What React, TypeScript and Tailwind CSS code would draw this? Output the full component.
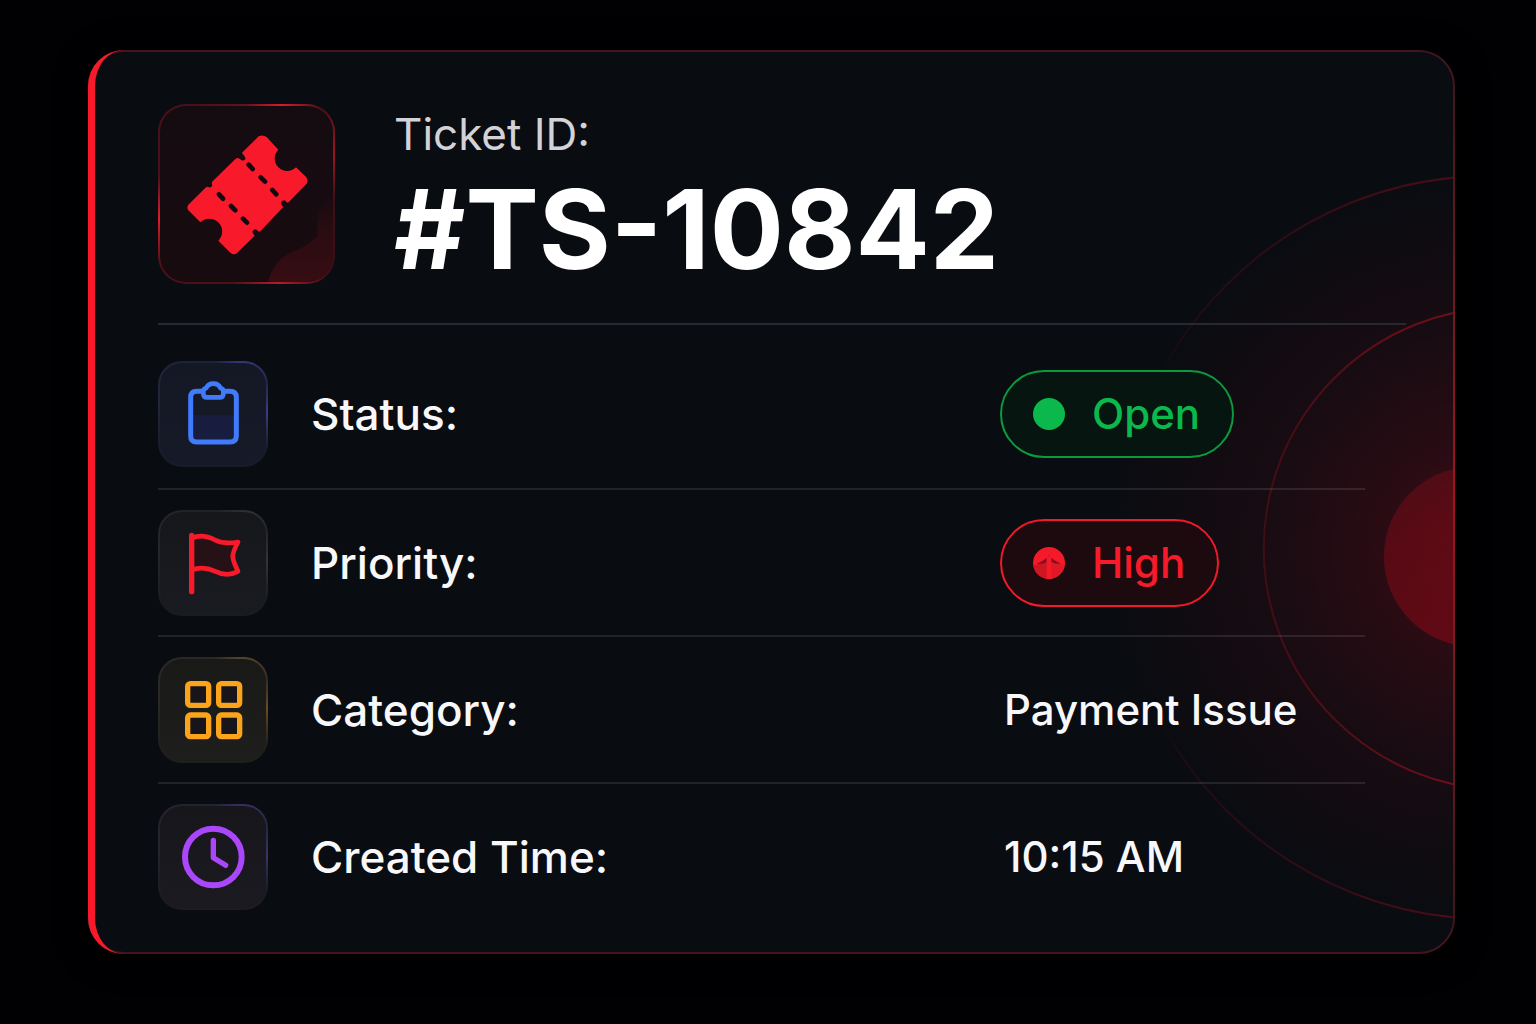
import type { ReactNode } from "react";

const TILE_BASE = "h-[106px] w-[110px] shrink-0 rounded-[24px] border-2 border-transparent";

function TicketIcon() {
  return (
    <svg viewBox="60 49 519 528" className="block h-full w-full" aria-hidden="true">
      <defs>
        <linearGradient id="waveFill" x1="0" y1="0" x2="0" y2="1">
          <stop offset="0" stopColor="#3a0d13" stopOpacity="0" />
          <stop offset="0.5" stopColor="#3a0d13" stopOpacity="0.6" />
          <stop offset="1" stopColor="#3a0d13" stopOpacity="0.9" />
        </linearGradient>
      </defs>
      <path d="M384 580C392 545 412 512 444 494C476 478 506 468 534 436C526 400 530 350 585 310V585H384Z" fill="url(#waveFill)" />
      <path
        fill="#f81a2a"
        d="M356 140Q368 134 380 142L415 180A34 34 0 1 0 468 233L499 263Q505 272 500 282L446 338Q440 341 438 335Q430 328 424 337Q422 345 430 352L364 422Q357 429 354 424Q346 414 338 424Q336 431 344 438L292 489Q282 498 271 489L235 453A34 34 0 0 0 181 398L145 362Q139 354 145 345L198 293Q204 289 207 293Q213 296 217 287Q213 279 218 275L287 207Q293 203 300 208Q308 217 316 209Q318 202 308 193Q305 189 309 186Z"
      />
      <path
        d="M326 225L338 238M362 263L375 276M397 301L409 314M237 314L249 327M273 349L286 362M309 387L321 399"
        stroke="#16090e"
        strokeWidth="14"
        strokeLinecap="round"
      />
    </svg>
  );
}

function ClipboardIcon() {
  return (
    <svg viewBox="30 39 318 306" className="block h-full w-full" fill="none" aria-hidden="true">
      <path d="M129 196H252V270H129Z" fill="#1b2150" opacity="0.6" />
      <path d="M157 124H140Q122 124 122 142V258Q122 276 140 276H240Q259 276 259 258V142Q259 124 240 124H223" stroke="#3f7bfa" strokeWidth="15" />
      <path d="M171 142H209Q220 142 220 131V124Q220 116 211 114Q206 101 190 101Q174 101 169 114Q160 116 160 124V131Q160 142 171 142Z" stroke="#3f7bfa" strokeWidth="14" strokeLinejoin="round" />
    </svg>
  );
}

function FlagIcon() {
  return (
    <svg viewBox="30 36 318 306" className="block h-full w-full" fill="none" aria-hidden="true">
      <path d="M125 115C150 103 172 108 195 120C217 131 237 131 264 126C242 168 244 172 264 214C240 227 218 225 196 214C170 202 150 200 125 210Z" fill="#261216" stroke="#f81a2a" strokeWidth="14" strokeLinejoin="round" />
      <path d="M125 106V275" stroke="#f81a2a" strokeWidth="16" strokeLinecap="round" />
    </svg>
  );
}

function GridIcon() {
  return (
    <svg viewBox="30 42 318 306" className="block h-full w-full" fill="#15151a" stroke="#faa31b" strokeWidth="16" aria-hidden="true">
      <rect x="113" y="116" width="63" height="65" rx="8" />
      <rect x="206" y="116" width="63" height="65" rx="8" />
      <rect x="113" y="210" width="63" height="65" rx="8" />
      <rect x="206" y="210" width="63" height="65" rx="8" />
    </svg>
  );
}

function ClockIcon() {
  return (
    <svg viewBox="30 46 318 306" className="block h-full w-full" fill="none" stroke="#ab47fb" strokeLinecap="round" strokeLinejoin="round" aria-hidden="true">
      <circle cx="190" cy="199" r="85" strokeWidth="18" />
      <path d="M190 149V201L227 224" strokeWidth="16" />
    </svg>
  );
}

function UpDot() {
  return (
    <svg viewBox="161 593 94 94" className="h-8 w-8 shrink-0" aria-hidden="true">
      <circle cx="208" cy="640" r="47" fill="#f51a2a" />
      <path d="M202 632V687A47 47 0 0 1 162 646Q186 645 202 632Z" fill="#c41522" opacity="0.8" />
      <path d="M214 632Q230 645 254 646A47 47 0 0 1 214 687Z" fill="#d81825" opacity="0.7" />
      <path d="M172 642Q196 632 208 617Q220 632 244 642Q228 644 214 636H202Q188 645 172 642Z" fill="#8a0e19" />
      <path d="M208 620V687" stroke="#f51a2a" strokeWidth="14" />
    </svg>
  );
}

function GlowRings() {
  return (
    <svg viewBox="0 0 500 899" preserveAspectRatio="xMaxYMid slice" className="absolute inset-y-0 right-0 h-full w-[500px]" fill="none" aria-hidden="true">
      <defs>
        <radialGradient id="glow" gradientUnits="userSpaceOnUse" cx="530" cy="498" r="385">
          <stop offset="0" stopColor="#d00a1c" stopOpacity="0.28" />
          <stop offset="0.3" stopColor="#c00a1c" stopOpacity="0.17" />
          <stop offset="0.6" stopColor="#a00a1c" stopOpacity="0.09" />
          <stop offset="1" stopColor="#900a1c" stopOpacity="0" />
        </radialGradient>
        <linearGradient id="outerRing" gradientUnits="userSpaceOnUse" x1="205" y1="0" x2="500" y2="0">
          <stop offset="0" stopColor="#8a0f1c" stopOpacity="0" />
          <stop offset="0.1" stopColor="#8a0f1c" stopOpacity="0.15" />
          <stop offset="1" stopColor="#8a0f1c" stopOpacity="0.5" />
        </linearGradient>
        <linearGradient id="innerRing" gradientUnits="userSpaceOnUse" x1="310" y1="0" x2="500" y2="0">
          <stop offset="0" stopColor="#8a0f1c" stopOpacity="0.35" />
          <stop offset="1" stopColor="#900f1c" stopOpacity="0.75" />
        </linearGradient>
        <linearGradient id="core" x1="0" y1="0" x2="0.3" y2="1">
          <stop offset="0" stopColor="#8a0c18" stopOpacity="0.35" />
          <stop offset="1" stopColor="#7d0815" stopOpacity="0.65" />
        </linearGradient>
      </defs>
      <rect width="500" height="899" fill="url(#glow)" />
      <circle cx="536" cy="495" r="371" stroke="url(#outerRing)" strokeWidth="2" />
      <circle cx="552" cy="496" r="241" stroke="url(#innerRing)" strokeWidth="2" />
      <circle cx="521" cy="504" r="90" fill="url(#core)" />
    </svg>
  );
}

type RowProps = { tile: string; icon: ReactNode; label: string; first?: boolean; last?: boolean; children: ReactNode };

function Row({ tile, icon, label, first, last, children }: RowProps) {
  return (
    <div className={`flex items-center ${first ? "pt-9" : "pt-5"} ${last ? "" : "border-b-2 border-white/10"} ${first ? "pb-[21px]" : last ? "" : "pb-[19px]"}`}>
      <dt className="flex min-w-0 flex-1 items-center gap-[43px] text-[44px] leading-[56px] font-medium">
        <span className={`${TILE_BASE} ${tile}`}>{icon}</span>
        {label}
      </dt>
      <dd className="w-[365px] shrink-0 text-[42px] leading-[56px] font-medium">{children}</dd>
    </div>
  );
}

export default function App() {
  return (
    <main className="min-h-screen bg-[#010103] pt-[50px] pr-[81px] pb-[71px] pl-[88px] font-['Inter',sans-serif] text-[#f8f8fa]">
      <article className="relative rounded-[36px] border-2 border-[#42151e] bg-[#090c11] shadow-[0_4px_28px_4px_#000000]">
        <div className="absolute inset-0 overflow-hidden rounded-[34px]">
          <GlowRings />
        </div>
        <div className="absolute -inset-0.5 rounded-[36px] border-l-[7px] border-[#f81a2a]" />
        <div className="absolute top-9 -right-0.5 bottom-9 w-0.5 bg-linear-to-b from-[#42151e] via-[#a01220] to-[#42151e]" />

        <div className="relative pt-[52px] pr-[47px] pb-[42px] pl-[68px]">
          <header className="flex items-start gap-[59px] border-b-2 border-[#262a30] pb-[39px]">
            <div className="h-[180px] w-[177px] shrink-0 overflow-hidden rounded-[28px] border-2 border-transparent [background:linear-gradient(#140c11,#180b0f)_padding-box,conic-gradient(#6a111c_0deg,#d91c2b_22deg,#4a1019_42deg,#9a1523_65deg,#3c0e16_95deg,#3c0e16_135deg,#b81a28_160deg,#4a1019_190deg,#4a1019_230deg,#e01c2b_254deg,#4a1019_282deg,#4a1019_330deg,#6a111c_360deg)_border-box]">
              <TicketIcon />
            </div>
            <div className="min-w-0 pt-0.5">
              <p className="text-[44px] leading-[56px] text-[#d2d2d8]">Ticket ID:</p>
              <h1 className="mt-3 text-[110px] leading-[110px] font-bold whitespace-nowrap text-white">#TS-10842</h1>
            </div>
          </header>

          <dl className="mr-[41px]">
            <Row
              first
              label="Status:"
              icon={<ClipboardIcon />}
              tile="[background:linear-gradient(#141724,#161927)_padding-box,conic-gradient(#1d2138_0deg,#33377a_30deg,#23284a_60deg,#3a3d85_88deg,#181b28_125deg,#181b28_230deg,#22263c_280deg,#1d2138_360deg)_border-box]"
            >
              <span className="inline-flex h-[88px] items-center gap-[27px] rounded-full border-2 border-[#0c9a40] bg-[#071510] pr-8 pl-[31px] align-middle text-[#0bb84c]">
                <span className="h-8 w-8 shrink-0 rounded-full bg-[#0bb84c]" />
                Open
              </span>
            </Row>
            <Row
              label="Priority:"
              icon={<FlagIcon />}
              tile="[background:linear-gradient(#16171b,#1a1b20)_padding-box,conic-gradient(#202126_0deg,#2f3036_35deg,#24252a_60deg,#34353b_88deg,#1b1c20_125deg,#1b1c20_230deg,#26272c_280deg,#202126_360deg)_border-box]"
            >
              <span className="inline-flex h-[88px] items-center gap-[27px] rounded-full border-2 border-[#f01a2a] bg-[#1c0a0e] pr-8 pl-[31px] align-middle text-[#f81a2a]">
                <UpDot />
                High
              </span>
            </Row>
            <Row
              label="Category:"
              icon={<GridIcon />}
              tile="[background:linear-gradient(#191918,#1e1e1d)_padding-box,conic-gradient(#2a2824_0deg,#59442a_30deg,#352c22_60deg,#6a4c24_88deg,#1f1f1d_125deg,#1f1f1d_230deg,#2a2926_280deg,#2a2824_360deg)_border-box]"
            >
              <span className="pl-1">Payment Issue</span>
            </Row>
            <Row
              last
              label="Created Time:"
              icon={<ClockIcon />}
              tile="[background:linear-gradient(#16161b,#1a1a20)_padding-box,conic-gradient(#232230_0deg,#3a2c66_30deg,#29263c_60deg,#3d326a_88deg,#1b1b20_125deg,#1b1b20_230deg,#25252f_280deg,#232230_360deg)_border-box]"
            >
              <span className="pl-1">10:15 AM</span>
            </Row>
          </dl>
        </div>
      </article>
    </main>
  );
}
